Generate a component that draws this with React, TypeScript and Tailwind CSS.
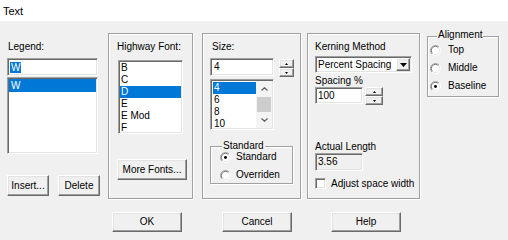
import React from "react";

const sunken =
  "border border-t-[#a0a0a0] border-l-[#a0a0a0] border-b-white border-r-white shadow-[inset_1px_1px_0_#696969,inset_-1px_-1px_0_#e3e3e3]";
const raised =
  "border border-t-white border-l-white border-b-[#696969] border-r-[#696969] shadow-[inset_-1px_-1px_0_#a0a0a0,inset_1px_1px_0_#e3e3e3] bg-[#f0f0f0]";
const etched =
  "border border-[#a0a0a0] shadow-[inset_1px_1px_0_#fff,1px_1px_0_#fff]";

function Btn({ className, children }: { className: string; children: React.ReactNode }) {
  return (
    <div className={`${raised} flex items-center justify-center ${className}`}>
      {children}
    </div>
  );
}

function Radio({ checked }: { checked?: boolean }) {
  return (
    <svg width="11" height="11" viewBox="0 0 12 12" className="shrink-0">
      <circle cx="6" cy="6" r="5.5" fill="#ffffff" />
      <path d="M2.1 9.9 A5.5 5.5 0 0 1 9.9 2.1" stroke="#a0a0a0" strokeWidth="1" fill="none" />
      <path d="M2.8 9.2 A4.5 4.5 0 0 1 9.2 2.8" stroke="#696969" strokeWidth="1" fill="none" />
      <path d="M9.9 2.1 A5.5 5.5 0 0 1 2.1 9.9" stroke="#ffffff" strokeWidth="1" fill="none" />
      <path d="M9.2 2.8 A4.5 4.5 0 0 1 2.8 9.2" stroke="#e3e3e3" strokeWidth="1" fill="none" />
      {checked && <circle cx="6" cy="6" r="1.6" fill="#000" />}
    </svg>
  );
}

function Spin({ className }: { className: string }) {
  return (
    <div className={`flex flex-col ${className}`}>
      <div className={`${raised} flex-1 flex items-center justify-center`}>
        <svg width="3" height="2" viewBox="0 0 3 2">
          <path d="M0 2 L1.5 0 L3 2 Z" fill="#000" />
        </svg>
      </div>
      <div className={`${raised} flex-1 flex items-center justify-center`}>
        <svg width="3" height="2" viewBox="0 0 3 2">
          <path d="M0 0 L1.5 2 L3 0 Z" fill="#000" />
        </svg>
      </div>
    </div>
  );
}

export default function App() {
  return (
    <div className="w-[508px] h-[240px] bg-[#f0f0f0] text-black text-[10px] leading-[12px] font-['Liberation_Sans',Arial,sans-serif] overflow-hidden">
      <div className="h-[21px] bg-white flex items-center pl-[3px] text-[11px]">Text</div>

      <div className="flex items-start pl-[7px] mt-[12px]">
        {/* Legend */}
        <div className="w-[93px] h-[166px] flex flex-col pt-[8px]">
          <div className="pl-[1px] h-[12px]">Legend:</div>
          <div className={`mt-[5px] w-[91px] h-[18px] bg-white ${sunken} flex items-center pl-[2px]`}>
            <span className="bg-[#0078d7] text-white px-[1px] leading-[11px]">W</span>
          </div>
          <div className={`mt-[1px] w-[91px] h-[77px] bg-white ${sunken} pt-[1px] px-[1px]`}>
            <div className="bg-[#0078d7] text-white h-[13px] pl-[2px] flex items-center">W</div>
          </div>
          <div className="mt-[21px] flex gap-[9px]">
            <Btn className="w-[42px] h-[21px]">Insert...</Btn>
            <Btn className="w-[42px] h-[21px]">Delete</Btn>
          </div>
        </div>

        {/* Highway Font */}
        <div className={`ml-[8px] w-[85px] h-[166px] ${etched} flex flex-col pl-[8px] pt-[7px]`}>
          <div className="h-[12px]">Highway Font:</div>
          <div className={`mt-[7px] ml-[1px] w-[65px] h-[74px] bg-white ${sunken} pt-[1px] px-[1px] flex flex-col`}>
            {["B", "C", "D", "E", "E Mod", "F"].map((f) => (
              <div
                key={f}
                className={`h-[12px] pl-[1px] flex items-center ${f === "D" ? "bg-[#0078d7] text-white" : ""}`}
              >
                {f}
              </div>
            ))}
          </div>
          <Btn className="mt-[25px] w-[70px] h-[21px]">More Fonts...</Btn>
        </div>

        {/* Size */}
        <div className={`ml-[9px] w-[99px] h-[166px] ${etched} flex flex-col pl-[7px] pt-[7px]`}>
          <div className="h-[12px] pl-[2px]">Size:</div>
          <div className="mt-[5px] flex items-start">
            <div className={`w-[64px] h-[18px] bg-white ${sunken} flex items-center pl-[3px]`}>4</div>
            <Spin className="ml-[5px] mt-[1px] w-[15px] h-[18px]" />
          </div>
          <div className={`mt-[2px] w-[64px] h-[51px] bg-white ${sunken} p-[1px] flex`}>
            <div className="flex-1 flex flex-col pt-[1px] pl-[1px]">
              {["4", "6", "8", "10"].map((s) => (
                <div
                  key={s}
                  className={`h-[12px] pl-[1px] flex items-center ${s === "4" ? "bg-[#0078d7] text-white" : ""}`}
                >
                  {s}
                </div>
              ))}
            </div>
            <div className="w-[16px] bg-[#f4f4f4] flex flex-col items-center">
              <div className="h-[16px] flex items-center justify-center">
                <svg width="7" height="4" viewBox="0 0 7 4">
                  <path d="M0.5 3.5 L3.5 0.8 L6.5 3.5" stroke="#606060" strokeWidth="1.3" fill="none" />
                </svg>
              </div>
              <div className="w-[14px] h-[15px] bg-[#cdcdcd]" />
              <div className="flex-1 flex items-center justify-center">
                <svg width="7" height="4" viewBox="0 0 7 4">
                  <path d="M0.5 0.5 L3.5 3.2 L6.5 0.5" stroke="#606060" strokeWidth="1.3" fill="none" />
                </svg>
              </div>
            </div>
          </div>
          <div className={`mt-[16px] w-[83px] h-[38px] ${etched} flex flex-col`}>
            <div className="-mt-[7px] ml-[11px] px-[1px] w-fit h-[12px] bg-[#f0f0f0]">Standard</div>
            <div className="-mt-[4px] flex flex-col pl-[9px]">
              <div className="h-[18px] flex items-center gap-[5px]">
                <Radio checked />
                <span>Standard</span>
              </div>
              <div className="h-[18px] flex items-center gap-[5px]">
                <Radio />
                <span>Overriden</span>
              </div>
            </div>
          </div>
        </div>

        {/* Kerning */}
        <div className={`ml-[6px] w-[113px] h-[166px] ${etched} flex flex-col pl-[7px] pt-[7px]`}>
          <div className="h-[12px]">Kerning Method</div>
          <div className={`mt-[3px] w-[97px] h-[17px] bg-white ${sunken} flex items-center`}>
            <span className="flex-1 pl-[2px]">Percent Spacing</span>
            <Btn className="w-[14px] h-[13px] mr-[1px]">
              <svg width="7" height="4" viewBox="0 0 7 4">
                <path d="M0 0 L7 0 L3.5 4 Z" fill="#000" />
              </svg>
            </Btn>
          </div>
          <div className="mt-[2px] h-[12px]">Spacing %</div>
          <div className="flex items-start">
            <div className={`w-[48px] h-[17px] bg-white ${sunken} flex items-center pl-[2px]`}>100</div>
            <Spin className="ml-[2px] w-[18px] h-[18px]" />
          </div>
          <div className="mt-[36px] h-[12px]">Actual Length</div>
          <div className={`w-[48px] h-[18px] bg-[#f0f0f0] ${sunken} flex items-center pl-[2px]`}>3.56</div>
          <div className="mt-[7px] h-[11px] flex items-center">
            <div className={`w-[11px] h-[11px] bg-white ${sunken}`} />
            <span className="ml-[5px]">Adjust space width</span>
          </div>
        </div>

        {/* Alignment */}
        <div className={`ml-[7px] mt-[3px] w-[72px] h-[61px] ${etched} flex flex-col`}>
          <div className="-mt-[8px] ml-[9px] px-[1px] w-fit h-[12px] bg-[#f0f0f0]">Alignment</div>
          <div className="flex flex-col pl-[2px]">
            <div className="h-[18px] flex items-center gap-[7px]">
              <Radio />
              <span>Top</span>
            </div>
            <div className="h-[18px] flex items-center gap-[7px]">
              <Radio />
              <span>Middle</span>
            </div>
            <div className="h-[18px] flex items-center gap-[7px]">
              <Radio checked />
              <span>Baseline</span>
            </div>
          </div>
        </div>
      </div>

      <div className="mt-[13px] flex pl-[112px]">
        <Btn className="w-[70px] h-[20px]">OK</Btn>
        <Btn className="ml-[40px] w-[70px] h-[20px]">Cancel</Btn>
        <Btn className="ml-[39px] w-[70px] h-[20px]">Help</Btn>
      </div>
    </div>
  );
}
